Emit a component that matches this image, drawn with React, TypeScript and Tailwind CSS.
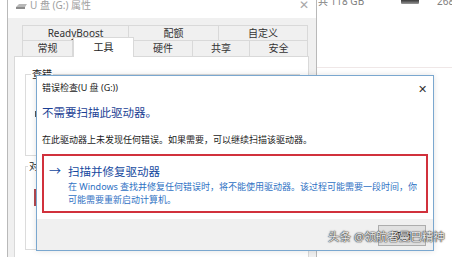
import React from "react";

function Tab({ label, w, selected }: { label: string; w: string; selected?: boolean }) {
  if (selected) {
    return (
      <div className={`${w} relative z-10 -mt-[2px] h-[20px] bg-white border border-b-0 border-[#d9d9d9] flex items-center justify-center text-[10px] text-[#222]`}>
        {label}
      </div>
    );
  }
  return (
    <div className={`${w} h-full bg-[#f0f0f0] border border-[#d9d9d9] -ml-px first:ml-0 flex items-center justify-center text-[10px] text-[#333]`}>
      {label}
    </div>
  );
}

export default function App() {
  return (
    <div className="relative w-[452px] h-[257px] overflow-hidden bg-white font-['Noto_Sans','Noto_Sans_CJK_SC',sans-serif]">
      {/* background explorer */}
      <div className="absolute left-[318px] top-[-6px] text-[10px] text-[#808080] leading-[14px] whitespace-nowrap">共 118 GB</div>
      <div className="absolute left-[401px] top-0 w-[18px] h-[4px] bg-gradient-to-b from-[#3a3a3a] to-[#9a9a9a] rounded-b-[1px]" />
      <div className="absolute left-[437px] top-[-6px] text-[10px] text-[#808080] leading-[14px]">268</div>
      <div className="absolute left-[316px] top-[67px] w-[140px] h-px bg-[#efe7e7]" />

      {/* properties window */}
      <div className="absolute left-[7px] top-[-8px] w-[310px] h-[280px] border-x border-[#b9b9b9] bg-[#f0f0f0] flex flex-col">
        <div className="h-[26px] bg-white flex items-center pl-[7px] pr-[7px]">
          <svg width="13" height="8" viewBox="0 0 13 8" className="mt-[2px]">
            <path d="M1 5 L4 2 L12 2 L10 5 Z" fill="#b8b8b8" />
            <path d="M1 5 L10 5 L10 7 L1 7 Z" fill="#8c8c8c" />
          </svg>
          <span className="ml-[2px] text-[10px] text-[#a0a0a0]">U 盘 (G:) 属性</span>
          <span className="ml-auto text-[12px] leading-none text-[#a8a8a8] font-light">✕</span>
        </div>
        <div className="pt-[7px] pl-[14px] flex flex-col">
          <div className="flex h-[16px]">
            <Tab label="ReadyBoost" w="w-[107px]" />
            <Tab label="配额" w="w-[91px]" />
            <Tab label="自定义" w="w-[90px]" />
          </div>
          <div className="flex h-[17px] -mt-px items-end">
            <Tab label="常规" w="w-[51px]" />
            <Tab label="工具" w="w-[61px]" selected />
            <Tab label="硬件" w="w-[60px]" />
            <Tab label="共享" w="w-[58px]" />
            <Tab label="安全" w="w-[59px]" />
          </div>
        </div>
        <div className="relative -mt-px ml-[6px] mr-[7px] flex-1 bg-white border border-[#d9d9d9] flex flex-col pl-[10px] pr-[8px]">
          <div className="mt-[17px] h-[82px] border border-[#dcdcdc] relative">
            <span className="absolute left-[5px] -top-[7px] bg-white px-px text-[10px] leading-[12px] text-[#222]">查错</span>
            <div className="absolute left-[9px] top-[36px] w-px h-[6px] bg-[#555]" />
          </div>
          <div className="mt-[10px] h-[84px] border border-[#dcdcdc] relative">
            <span className="absolute left-[2px] -top-[7px] bg-white px-px text-[10px] leading-[12px] text-[#222] whitespace-nowrap">对驱动器进行优化</span>
            <div className="absolute left-[8px] top-[22px] w-[2px] h-[17px] bg-[#b4474f]" />
          </div>
        </div>
      </div>

      {/* error checking dialog */}
      <div className="absolute left-[36px] top-[75px] w-[398px] h-[176px] border border-[#7aa7cf] bg-white flex flex-col shadow-[0_0_6px_rgba(0,0,0,0.12)]">
        <div className="h-[24px] flex items-center pl-[5px] pr-[6px]">
          <span className="text-[9px] text-[#1a1a1a]">错误检查(U 盘 (G:))</span>
          <span className="ml-auto text-[11px] leading-none text-[#333] font-light">✕</span>
        </div>
        <div className="pl-[5px] flex flex-col">
          <div className="mt-[5px] text-[11.5px] leading-[16px] text-[#1c3f95]">不需要扫描此驱动器。</div>
          <div className="mt-[12px] text-[9px] leading-[13px] text-[#1a1a1a]">在此驱动器上未发现任何错误。如果需要，可以继续扫描该驱动器。</div>
          <div className="mt-[8px] w-[386px] h-[59px] border-2 border-[#d1313c] pl-[5px] pt-[8px] flex flex-col">
            <div className="flex items-center h-[16px] text-[#14489e]">
              <span className="w-[19px] text-[12px] leading-[16px]">→</span>
              <span className="text-[11.5px] leading-[16px]">扫描并修复驱动器</span>
            </div>
            <div className="pl-[19px] text-[9px] leading-[13px] text-[#2f72c4] whitespace-nowrap">
              在 Windows 查找并修复任何错误时，将不能使用驱动器。该过程可能需要一段时间，你
            </div>
            <div className="pl-[19px] text-[9px] leading-[13px] text-[#2f72c4]">可能需要重新启动计算机。</div>
          </div>
        </div>
        <div className="mt-[6px] flex-1 bg-[#f0f0f0] flex justify-end items-start pt-[6px] pr-[7px]">
          <div className="w-[48px] h-[21px] bg-[#e1e1e1] border border-[#adadad] flex items-center justify-center text-[9px] text-[#1a1a1a]">
            取消
          </div>
        </div>
      </div>

      {/* watermark */}
      <div className="absolute left-[328px] top-[229px] whitespace-nowrap text-[11.5px] leading-[16px] text-[#ececec] [text-shadow:0_0_1px_#333,0_0_1px_#333,0_0_2px_#555]">
        头条 @领航者曼巴精神
      </div>
    </div>
  );
}
